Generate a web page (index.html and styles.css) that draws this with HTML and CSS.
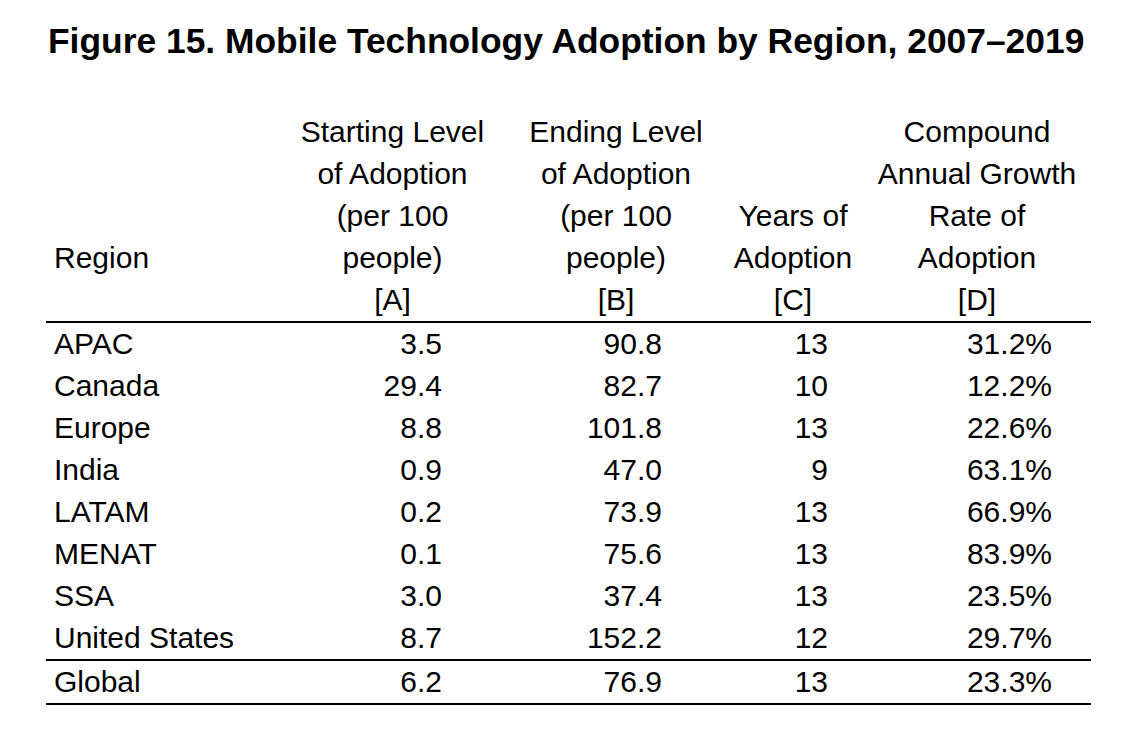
FILE: index.html
```html
<!DOCTYPE html>
<html lang="en">
<head>
<meta charset="utf-8">
<title>Figure 15</title>
<link rel="stylesheet" href="styles.css">
</head>
<body>
<div class="page">
  <h1 class="title">Figure 15. Mobile Technology Adoption by Region, 2007–2019</h1>
  <table class="data">
    <colgroup>
      <col class="c-region">
      <col class="c-a">
      <col class="c-b">
      <col class="c-c">
      <col class="c-d">
    </colgroup>
    <thead>
      <tr class="head">
        <th class="h-region">Region</th>
        <th class="h-a">Starting Level<br>of Adoption<br>(per 100<br>people)<br>[A]</th>
        <th class="h-b">Ending Level<br>of Adoption<br>(per 100<br>people)<br>[B]</th>
        <th class="h-c">Years of<br>Adoption<br>[C]</th>
        <th class="h-d">Compound<br>Annual Growth<br>Rate of<br>Adoption<br>[D]</th>
      </tr>
    </thead>
    <tbody>
      <tr><td class="r">APAC</td><td class="a">3.5</td><td class="b">90.8</td><td class="c">13</td><td class="d">31.2%</td></tr>
      <tr><td class="r">Canada</td><td class="a">29.4</td><td class="b">82.7</td><td class="c">10</td><td class="d">12.2%</td></tr>
      <tr><td class="r">Europe</td><td class="a">8.8</td><td class="b">101.8</td><td class="c">13</td><td class="d">22.6%</td></tr>
      <tr><td class="r">India</td><td class="a">0.9</td><td class="b">47.0</td><td class="c">9</td><td class="d">63.1%</td></tr>
      <tr><td class="r">LATAM</td><td class="a">0.2</td><td class="b">73.9</td><td class="c">13</td><td class="d">66.9%</td></tr>
      <tr><td class="r">MENAT</td><td class="a">0.1</td><td class="b">75.6</td><td class="c">13</td><td class="d">83.9%</td></tr>
      <tr><td class="r">SSA</td><td class="a">3.0</td><td class="b">37.4</td><td class="c">13</td><td class="d">23.5%</td></tr>
      <tr class="last"><td class="r">United States</td><td class="a">8.7</td><td class="b">152.2</td><td class="c">12</td><td class="d">29.7%</td></tr>
      <tr class="total"><td class="r">Global</td><td class="a">6.2</td><td class="b">76.9</td><td class="c">13</td><td class="d">23.3%</td></tr>
    </tbody>
  </table>
</div>
</body>
</html>
```

FILE: styles.css
```css
html, body {
  margin: 0;
  padding: 0;
  background: #ffffff;
}

body {
  font-family: "Liberation Sans", Arial, Helvetica, sans-serif;
  color: #000000;
}

.page {
  padding: 20px 0 0 46px;
}

.title {
  margin: 0 0 0 2px;
  font-size: 35.4px;
  line-height: 42px;
  font-weight: 700;
  white-space: nowrap;
}

.data {
  margin-top: 49px;
  width: 1045px;
  table-layout: fixed;
  border-collapse: collapse;
  border-spacing: 0;
  font-size: 30px;
  line-height: 42px;
}

.c-region { width: 236px; }
.c-a { width: 221px; }
.c-b { width: 226px; }
.c-c { width: 128px; }
.c-d { width: 234px; }

.data th,
.data td {
  padding: 0;
  white-space: nowrap;
}

.data th {
  font-weight: 400;
  text-align: center;
  vertical-align: bottom;
}

.head {
  border-bottom: 2px solid #000;
}

.data th.h-region {
  text-align: left;
  padding-left: 8px;
  padding-bottom: 42px;
}

.data th.h-d {
  padding-left: 6px;
}

.data td.r {
  text-align: left;
  padding-left: 8px;
}

.data td.a { text-align: right; padding-right: 61px; }
.data td.b { text-align: right; padding-right: 67px; }
.data td.c { text-align: right; padding-right: 29px; }
.data td.d { text-align: right; padding-right: 39px; }

.last,
.total {
  border-bottom: 2px solid #000;
}
```
